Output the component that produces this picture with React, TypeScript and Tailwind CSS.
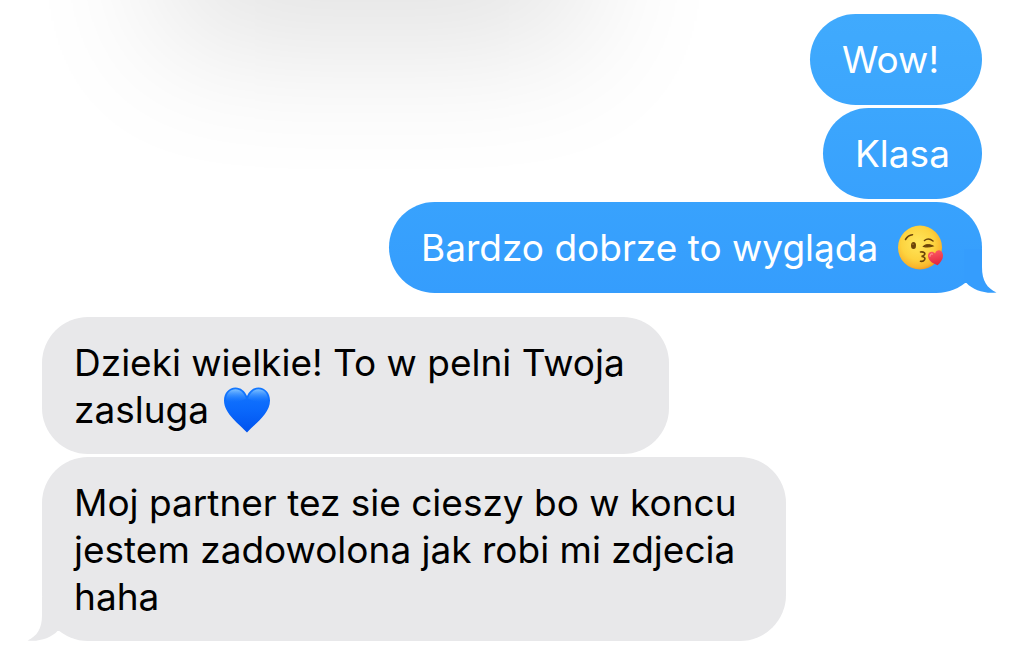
import type { ReactNode } from 'react';
import clsx from 'clsx';

function KissEmoji() {
  return (
    <svg
      viewBox="0 0 48 48"
      role="img"
      aria-label="Face blowing a kiss"
      className="-my-1 ml-2 inline-block size-12 align-[-7px]"
    >
      <defs>
        <radialGradient id="kiss-face" cx="0.45" cy="0.4" r="0.62">
          <stop offset="0" stopColor="#ffe65c" />
          <stop offset="0.6" stopColor="#fdd33f" />
          <stop offset="0.88" stopColor="#f9b62c" />
          <stop offset="1" stopColor="#ee9420" />
        </radialGradient>
        <linearGradient id="kiss-heart" x1="0" y1="0" x2="0" y2="1">
          <stop offset="0" stopColor="#fb5560" />
          <stop offset="1" stopColor="#e0243c" />
        </linearGradient>
      </defs>
      <circle cx="23" cy="23.5" r="22" fill="url(#kiss-face)" />
      <g fill="none" stroke="#6b4409" strokeLinecap="round">
        <path d="M8.500 15.500C10 12.800 12.500 11 15.500 10.700" strokeWidth="1.600" />
        <path d="M27.500 16.500C30 14.500 33.500 15 36 17" strokeWidth="1.600" />
        <path d="M26.500 22.500C29 19.800 33 20 36 22C33 23 29.500 23.300 26.500 22.500Z" fill="#6b4409" strokeWidth="1.200" />
        <path d="M23.500 28C27 27.500 28.500 29 27.500 30.700C26.800 32 25.500 32.200 24.500 32.500C27 32.500 28.700 34 27.500 35.800C26.700 37.100 25 37.500 23.500 37.200" strokeWidth="1.600" />
      </g>
      <ellipse cx="16.500" cy="21.500" rx="2.500" ry="3.600" fill="#6b4409" />
      <circle cx="16" cy="20.200" r="0.800" fill="#a87822" />
      <g transform="rotate(-12 39 34)">
        <path
          d="M39 41.500C35 39 31.500 36 31.500 31.500C31.500 26.500 37 25.500 39 29.500C41 25.500 46.500 26.500 46.500 31.500C46.500 36 43 39 39 41.500Z"
          fill="url(#kiss-heart)"
        />
        <path d="M33.500 31C33.800 29.300 35.200 28.800 36.300 29.400" fill="none" stroke="#ff9090" strokeWidth="1.200" strokeLinecap="round" />
      </g>
    </svg>
  );
}

function BlueHeart() {
  return (
    <svg
      viewBox="0 0 48 48"
      role="img"
      aria-label="Blue heart"
      className="-my-1 ml-1 inline-block size-12 align-[-7px]"
    >
      <defs>
        <linearGradient id="heart-fill" x1="0" y1="0" x2="0" y2="1">
          <stop offset="0" stopColor="#1478ff" />
          <stop offset="0.5" stopColor="#0a68fb" />
          <stop offset="1" stopColor="#0052ee" />
        </linearGradient>
        <linearGradient id="heart-shine" x1="0" y1="0" x2="0" y2="1">
          <stop offset="0" stopColor="#8ccaff" stopOpacity="0.900" />
          <stop offset="1" stopColor="#2a86ff" stopOpacity="0" />
        </linearGradient>
      </defs>
      <path
        d="M24 46.500C17 38.500 1 28 1 14.500C1 7 6 1.500 12.500 1.500C17.800 1.500 21.800 5 24 10C26.200 5 30.200 1.500 35.500 1.500C42 1.500 47 7 47 14.500C47 28 31 38.500 24 46.500Z"
        fill="url(#heart-fill)"
      />
      <path d="M3 14C3 7 7.500 3.200 12.500 3.200C17.500 3.200 21 7 23 12.500C17 16 7 18 3 14Z" fill="url(#heart-shine)" />
      <path d="M45 14C45 7 40.500 3.200 35.500 3.200C30.500 3.200 27 7 25 12.500C31 16 41 18 45 14Z" fill="url(#heart-shine)" />
    </svg>
  );
}

// Drawn for the right-hand side, mirrored for incoming messages.
function Tail({ className }: { className: string }) {
  return (
    <svg viewBox="0 0 33 44" aria-hidden="true" className={clsx('absolute bottom-0 h-11 w-[33px]', className)}>
      <path
        d="M0 0H18V18C18 32 23 39 32.500 43.500C21 45 9 41 2.500 34L0 34Z"
        fill="currentColor"
      />
    </svg>
  );
}

function Sent({ children, className, tail }: { children: ReactNode; className: string; tail?: boolean }) {
  return (
    <li className={clsx('relative self-end rounded-[46px] py-[22px] pr-8 pl-8 text-white', className)}>
      {tail && <Tail className="-right-[15px] text-[#359dfd]" />}
      <p className="relative">{children}</p>
    </li>
  );
}

function Received({ children, className, tail }: { children: ReactNode; className: string; tail?: boolean }) {
  return (
    <li
      className={clsx(
        'relative self-start rounded-[46px] bg-[#e8e8ea] pt-[22px] pr-8 pb-[21px] pl-8 text-black',
        className,
      )}
    >
      {tail && <Tail className="-left-[15px] -scale-x-100 text-[#e8e8ea]" />}
      <p className="relative">{children}</p>
    </li>
  );
}

export default function App() {
  return (
    <main className="relative min-h-screen overflow-hidden bg-white font-['Inter',sans-serif] text-[37px] leading-[47px]">
      {/* soft shadow falling in from above the thread */}
      <div
        aria-hidden="true"
        className="absolute bottom-full left-[16%] h-[300px] w-[41%] shadow-[0_45px_140px_rgba(0,0,0,0.12)]"
      />
      <ul className="relative flex flex-col gap-[3px] pt-[14px] pr-[42px] pb-5 pl-[42px]">
        <Sent className="min-w-[172px] bg-linear-to-b from-[#40aafd] to-[#3ca6fd]">Wow!</Sent>
        <Sent className="min-w-[159px] bg-linear-to-b from-[#3ca6fd] to-[#38a1fd]">Klasa</Sent>
        <Sent className="mb-[21px] min-w-[593px] bg-linear-to-b from-[#38a2fd] to-[#359dfd]" tail>
          Bardzo dobrze to wygląda <KissEmoji />
        </Sent>
        <Received className="min-w-[627px]">
          Dzieki wielkie! To w pelni Twoja
          <br />
          zasluga <BlueHeart />
        </Received>
        <Received className="min-w-[744px]" tail>
          Moj partner tez sie cieszy bo w koncu
          <br />
          jestem zadowolona jak robi mi zdjecia
          <br />
          haha
        </Received>
      </ul>
    </main>
  );
}
